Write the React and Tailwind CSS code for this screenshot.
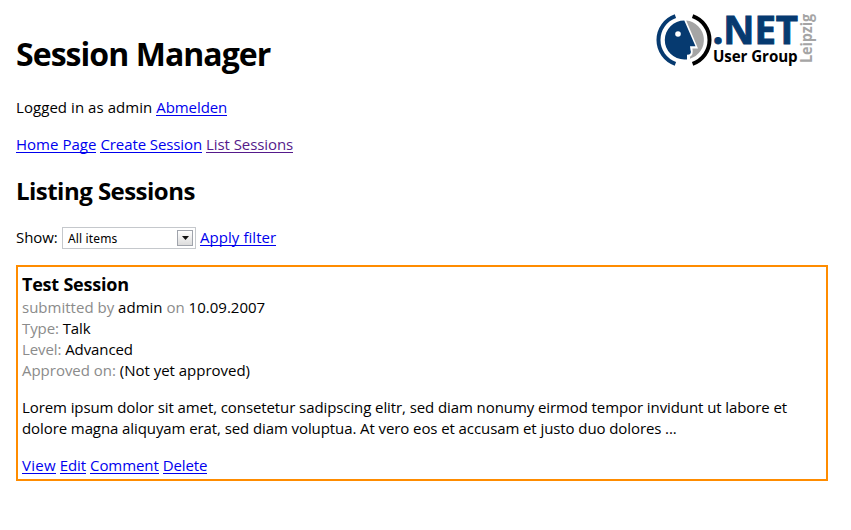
function Logo() {
  return (
    <svg className="absolute left-[652px] top-0 h-[76px] w-[170px] font-['Open_Sans',sans-serif]" viewBox="652 0 170 76">
      <g fill="none" strokeWidth="4">
        <path d="M675.4 16.2A25.2 25.2 0 0 0 675.4 63.8" stroke="#063a70" />
        <path d="M692.6 16.2A25.2 25.2 0 0 1 692.6 63.8" stroke="#000" />
      </g>
      <path d="M684.3 20.5A19.5 19.5 0 0 0 684.3 59.5H687V54.8Q692.3 54.8 690.4 49.5L690 46.3H695.5Z" fill="#063a70" />
      <path d="M686.2 20.6A19.5 19.5 0 0 1 690 58.7V56.8Q693.8 54.5 692.4 48.5H698Z" fill="#a5a5a5" />
      <circle cx="678" cy="34" r="2.8" fill="#fff" />
      <text x="712.5" y="43.8" fontSize="38.5" fontWeight="700" fill="#063a70" stroke="#063a70" strokeWidth=".9" textLength="85.5" lengthAdjust="spacingAndGlyphs">.NET</text>
      <text x="713" y="61.7" fontSize="16" fontWeight="700" fill="#000" textLength="84.5" lengthAdjust="spacingAndGlyphs">User Group</text>
      <text transform="translate(811.5 63) rotate(-90)" fontSize="15.5" fontWeight="700" fill="#a5a5a5" textLength="49" lengthAdjust="spacingAndGlyphs">Leipzig</text>
    </svg>
  );
}

function Link({ children, className = "text-[#0000ee]" }) {
  return (
    <a href="#" className={`inline-block h-[19px] border-b align-top leading-[21px] ${className} border-current`}>
      {children}
    </a>
  );
}

function Label({ children }) {
  return <span className="text-[#8b8b8b]">{children}</span>;
}

export default function App() {
  return (
    <main className="relative h-[530px] w-[851px] overflow-hidden bg-white pl-4 pt-8 font-['Open_Sans',sans-serif] text-[15px] leading-[21px] tracking-[-0.09px] text-black">
      <Logo />
      <h1 className="h-[43px] text-[32px] font-bold leading-[43px] tracking-[-0.95px]">Session Manager</h1>
      <p className="mt-[22px]"><span className="tracking-[0.06px]">Logged in as admin </span><Link>Abmelden</Link></p>
      <nav className="mt-4 flex gap-1">
        <Link className="tracking-[0.02px] text-[#0000ee]">Home Page</Link>
        <Link>Create Session</Link>
        <Link className="text-[#551a8b]">List Sessions</Link>
      </nav>
      <h2 className="mt-[22px] text-[24px] font-bold leading-8 tracking-[-0.53px]">Listing Sessions</h2>
      <div className="mt-5 flex h-[22px] items-start">
        <span className="w-[46px]">Show:</span>
        <div className="flex h-[22px] w-[134px] items-center justify-between border border-[#c5c8cc] pl-[5px] pr-[2px] font-['Noto_Sans',sans-serif] text-[12px] tracking-[0.15px]">
          <span>All items</span>
          <span className="flex h-4 w-4 items-center justify-center border border-[#a0a4ac] bg-gradient-to-b from-white to-[#dcdcdc]">
            <svg width="7" height="4" viewBox="0 0 7 4"><path d="M0 0h7L3.5 4Z" fill="#111" /></svg>
          </span>
        </div>
        <span className="ml-1 tracking-[0.06px]"><Link>Apply filter</Link></span>
      </div>
      <section className="mt-4 h-[216px] w-[812px] border-2 border-[#ff8c00] pl-1 pt-[5px]">
        <h3 className="h-[25px] text-[18px] font-bold leading-[25px] tracking-[-0.22px]">Test Session</h3>
        <p className="tracking-[0.01px]"><Label>submitted by</Label> admin <Label>on</Label> 10.09.2007</p>
        <p><Label>Type:</Label> Talk</p>
        <p><Label>Level:</Label> Advanced</p>
        <p className="tracking-[-0.02px]"><Label>Approved on:</Label> (Not yet approved)</p>
        <p className="mt-4 whitespace-nowrap">
          Lorem ipsum dolor sit amet, consetetur sadipscing elitr, sed diam nonumy eirmod tempor invidunt ut labore et<br />
          dolore magna aliquyam erat, sed diam voluptua. At vero eos et accusam et justo duo dolores ...
        </p>
        <div className="mt-4 flex gap-1">
          <Link className="tracking-[0.25px] text-[#0000ee]">View</Link><Link>Edit</Link><Link>Comment</Link><Link>Delete</Link>
        </div>
      </section>
    </main>
  );
}
